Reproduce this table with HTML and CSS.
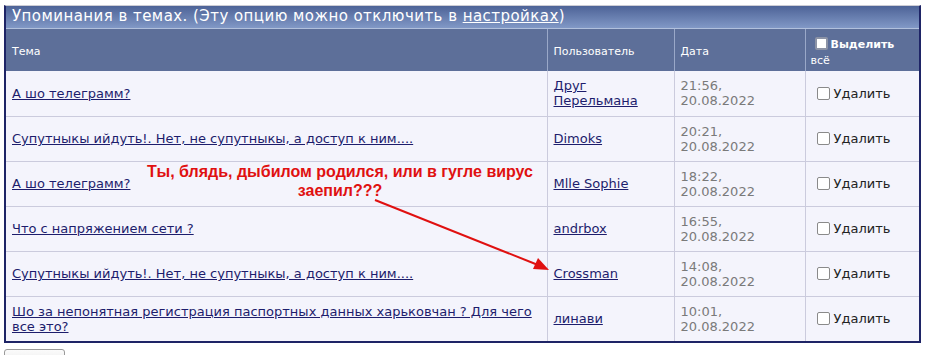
FILE: index.html
```html
<!DOCTYPE html>
<html lang="ru">
<head>
<meta charset="utf-8">
<title>Упоминания в темах</title>
<link rel="stylesheet" href="styles.css">
</head>
<body>
<div class="page">
  <div class="board">
    <div class="title">Упоминания в темах. (Эту опцию можно отключить в <a href="#">настройках</a>)</div>
    <table class="list">
      <colgroup>
        <col class="c-topic"><col class="c-user"><col class="c-date"><col class="c-del">
      </colgroup>
      <thead>
        <tr>
          <th>Тема</th>
          <th>Пользователь</th>
          <th>Дата</th>
          <th class="sel"><span class="box box-white"></span><b>Выделить</b><br>всё</th>
        </tr>
      </thead>
      <tbody>
        <tr>
          <td><a href="#">А шо телеграмм?</a></td>
          <td><a href="#">Друг<br>Перельмана</a></td>
          <td class="date">21:56,<br>20.08.2022</td>
          <td class="del"><span class="box"></span>Удалить</td>
        </tr>
        <tr>
          <td><a href="#">Супутныкы ийдуть!. Нет, не супутныкы, а доступ к ним....</a></td>
          <td><a href="#">Dimoks</a></td>
          <td class="date">20:21,<br>20.08.2022</td>
          <td class="del"><span class="box"></span>Удалить</td>
        </tr>
        <tr>
          <td><a href="#">А шо телеграмм?</a></td>
          <td><a href="#">Mlle Sophie</a></td>
          <td class="date">18:22,<br>20.08.2022</td>
          <td class="del"><span class="box"></span>Удалить</td>
        </tr>
        <tr>
          <td><a href="#">Что с напряжением сети ?</a></td>
          <td><a href="#">andrbox</a></td>
          <td class="date">16:55,<br>20.08.2022</td>
          <td class="del"><span class="box"></span>Удалить</td>
        </tr>
        <tr>
          <td><a href="#">Супутныкы ийдуть!. Нет, не супутныкы, а доступ к ним....</a></td>
          <td><a href="#">Crossman</a></td>
          <td class="date">14:08,<br>20.08.2022</td>
          <td class="del"><span class="box"></span>Удалить</td>
        </tr>
        <tr>
          <td><a href="#">Шо за непонятная регистрация паспортных данных харьковчан ? Для чего все это?</a></td>
          <td><a href="#">линави</a></td>
          <td class="date">10:01,<br>20.08.2022</td>
          <td class="del"><span class="box"></span>Удалить</td>
        </tr>
      </tbody>
    </table>
  </div>
  <button class="btn" type="button">Удалить</button>

  <div class="note">Ты, блядь, дыбилом родился, или в гугле вирус<br>заепил???</div>
  <svg class="arrow" width="930" height="355" viewBox="0 0 930 355">
    <line x1="375" y1="200" x2="538" y2="265" stroke="#e01010" stroke-width="2"/>
    <polygon points="549,270 533,269 538,258" fill="#e01010"/>
  </svg>
</div>
</body>
</html>
```

FILE: styles.css
```css
html, body {
  margin: 0;
  padding: 0;
  background: #ffffff;
}
body {
  font-family: "DejaVu Sans", Verdana, sans-serif;
  overflow: hidden;
}
.page {
  position: relative;
  width: 930px;
  height: 355px;
  padding-top: 5px;
  box-sizing: border-box;
}
.board {
  margin-left: 4px;
  width: 917px;
  border-top: 1px solid #cdcdd5;
  border-left: 2px solid #1e2466;
  border-right: 2px solid #1e2466;
  border-bottom: 2px solid #1e2466;
  box-sizing: border-box;
}
.title {
  height: 22px;
  line-height: 21px;
  padding-left: 6px;
  color: #ffffff;
  font-size: 15px;
  letter-spacing: 0.45px;
  background: linear-gradient(#4d6397, #8198c6);
  border-bottom: 1px solid #b1c0dc;
  white-space: nowrap;
}
.title a {
  color: #ffffff;
}
.list {
  width: 100%;
  border-collapse: collapse;
  table-layout: fixed;
}
.c-topic { width: 541px; }
.c-user { width: 127px; }
.c-date { width: 131px; }
.c-del { width: auto; }
.list th {
  height: 42px;
  box-sizing: border-box;
  background: #5d6f99;
  color: #ffffff;
  font-size: 11px;
  font-weight: normal;
  text-align: left;
  padding: 4px 6px 0;
  border-left: 1px solid #9aa8c8;
  line-height: 16px;
}
.list th:first-child {
  border-left: none;
}
.list th.sel {
  padding-left: 5px;
  padding-top: 6px;
}
.list th.sel b {
  font-weight: bold;
  font-size: 11px;
}
.box {
  display: inline-block;
  width: 11px;
  height: 11px;
  border: 1px solid #8a8a8a;
  border-radius: 2px;
  background: #ffffff;
  vertical-align: -2px;
  margin-right: 3px;
}
.list td .box {
  margin-right: 4px;
}
.box-white {
  border: 2px solid #8c93a6;
  width: 9px;
  height: 9px;
  margin-left: 4px;
}
.list td {
  height: 45px;
  box-sizing: border-box;
  background: #f4f4fc;
  border-top: 1px solid #cbcbdd;
  border-left: 1px solid #cbcbdd;
  padding: 0 6px;
  font-size: 13px;
  line-height: 15px;
  color: #222222;
  vertical-align: middle;
}
.list td:first-child {
  border-left: none;
}
.list tbody tr:first-child td {
  border-top: none;
}
.list td a {
  color: #1d1d6c;
  text-decoration: underline;
}
.list td.date {
  color: #7a7a7a;
}
.list td.del {
  padding-left: 11px;
  white-space: nowrap;
}
.btn {
  display: block;
  margin: 6px 0 0 4px;
  width: 61px;
  height: 22px;
  padding: 0;
  font-family: "DejaVu Sans", Verdana, sans-serif;
  font-size: 12px;
  color: #222222;
  background: linear-gradient(#fbfbfb, #e4e4e4);
  border: 1px solid #9a9a9a;
  border-radius: 3px;
}
.note {
  position: absolute;
  left: 100px;
  top: 162px;
  width: 480px;
  text-align: center;
  color: #e01010;
  font-family: "Liberation Sans", Arial, sans-serif;
  font-weight: bold;
  font-size: 16px;
  line-height: 19px;
}
.arrow {
  position: absolute;
  left: 0;
  top: 0;
  pointer-events: none;
}
```
